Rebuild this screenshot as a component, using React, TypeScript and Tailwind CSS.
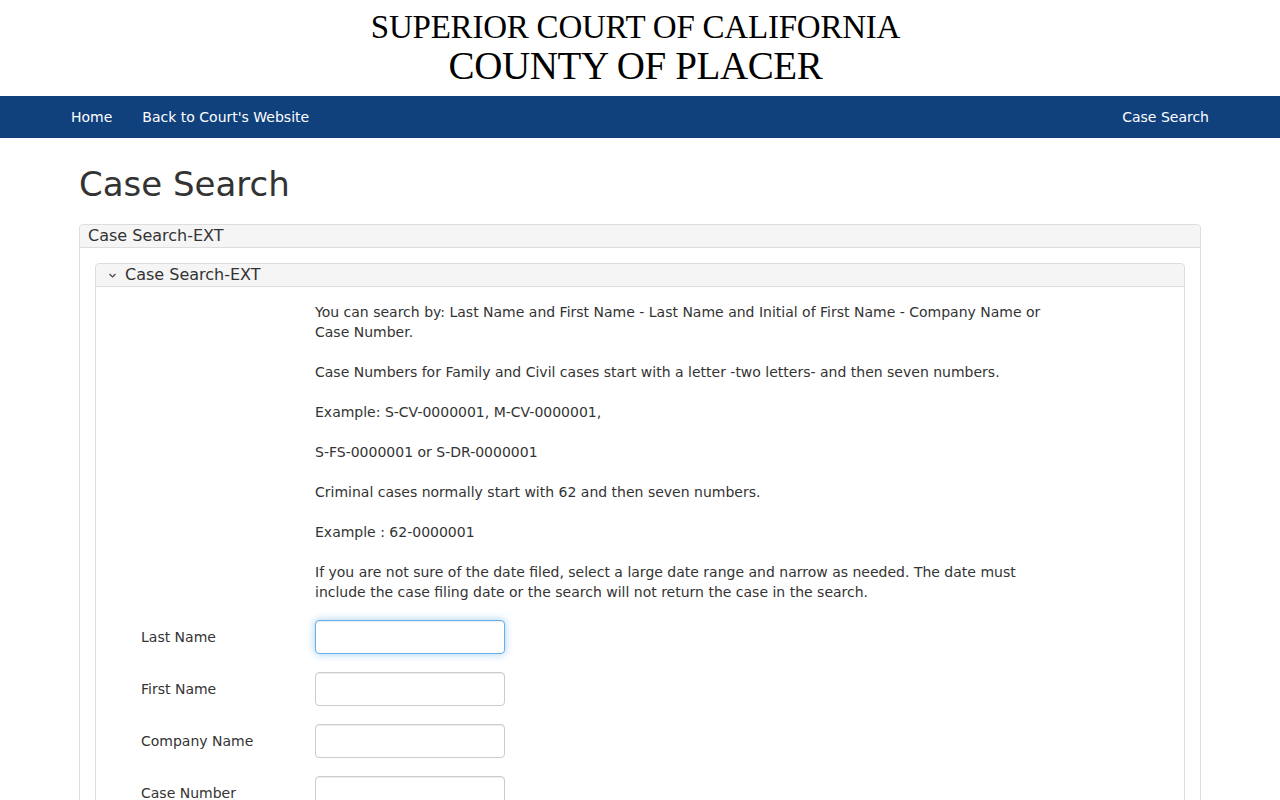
import React from "react";

function Field({ label, focus }: { label: string; focus?: boolean }) {
  return (
    <div className="flex items-center h-[34px] mb-[18px]">
      <label className="w-[174px] text-[14px] text-[#333333]">{label}</label>
      {focus ? (
        <input className="w-[190px] h-[34px] bg-white rounded-[4px] border border-[#66afe9] outline-none shadow-[inset_0_1px_1px_rgba(0,0,0,0.075),0_0_8px_rgba(102,175,233,0.6)]" />
      ) : (
        <input className="w-[190px] h-[34px] bg-white rounded-[4px] border border-[#cccccc] outline-none shadow-[inset_0_1px_1px_rgba(0,0,0,0.075)]" />
      )}
    </div>
  );
}

export default function App() {
  return (
    <div className="h-[800px] overflow-hidden bg-white font-['DejaVu_Sans',sans-serif] text-[14px] leading-[20px] text-[#333333]">
      <header className="h-[96px] pr-[9px] flex flex-col items-center bg-white font-['Liberation_Serif',serif] text-black">
        <div className="pt-[9px] h-[44px] text-[33px] leading-[36px] whitespace-nowrap tracking-[-0.22px]">SUPERIOR COURT OF CALIFORNIA</div>
        <div className="h-[44px] text-[39px] leading-[44px] whitespace-nowrap tracking-[-0.38px]">COUNTY OF PLACER</div>
      </header>
      <nav className="h-[42px] bg-[#10417d] flex items-center justify-between pl-[71px] pr-[71px] text-white">
        <div className="flex gap-[30px]">
          <a>Home</a>
          <a>Back to Court's Website</a>
        </div>
        <a>Case Search</a>
      </nav>
      <main className="mx-[79px] w-[1122px]">
        <h1 className="mt-[26px] mb-[20px] h-[40px] text-[34px] leading-[40px] font-normal text-[#333333]">Case Search</h1>
        <section className="border border-[#dddddd] rounded-t-[4px] h-[700px]">
          <div className="h-[23px] bg-[#f5f5f5] border-b border-[#dddddd] rounded-t-[4px] pl-[8px] text-[16px] leading-[21px]">Case Search-EXT</div>
          <div className="pt-[15px] px-[15px]">
            <section className="border border-[#dddddd] rounded-t-[4px] h-[700px]">
              <div className="h-[23px] bg-[#f5f5f5] border-b border-[#dddddd] rounded-t-[4px] flex items-start text-[16px] leading-[21px]">
                <svg className="ml-[12px] mr-[8px] mt-[7px]" width="9" height="9" viewBox="0 0 9 9" fill="none" stroke="#444444" strokeWidth="1.2"><path d="M1.5 3 L4.5 6 L7.5 3" /></svg>
                <span>Case Search-EXT</span>
              </div>
              <div className="pl-[45px] pt-[15px]">
                <div className="ml-[174px] w-[745px] mb-[18px]">
                  <p>You can search by: Last Name and First Name - Last Name and Initial of First Name - Company Name or Case Number.</p>
                  <p className="mt-[20px]">Case Numbers for Family and Civil cases start with a letter -two letters- and then seven numbers.</p>
                  <p className="mt-[20px]">Example: S-CV-0000001, M-CV-0000001,</p>
                  <p className="mt-[20px]">S-FS-0000001 or S-DR-0000001</p>
                  <p className="mt-[20px]">Criminal cases normally start with 62 and then seven numbers.</p>
                  <p className="mt-[20px]">Example : 62-0000001</p>
                  <p className="mt-[20px]">If you are not sure of the date filed, select a large date range and narrow as needed. The date must include the case filing date or the search will not return the case in the search.</p>
                </div>
                <Field label="Last Name" focus />
                <Field label="First Name" />
                <Field label="Company Name" />
                <Field label="Case Number" />
              </div>
            </section>
          </div>
        </section>
      </main>
    </div>
  );
}
